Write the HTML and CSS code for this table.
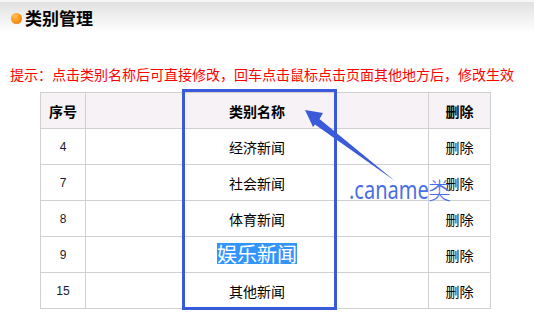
FILE: index.html
```html
<!DOCTYPE html>
<html>
<head>
<meta charset="utf-8">
<link rel="stylesheet" href="styles.css">
</head>
<body>
<div class="header">
  <span class="dot"></span>
  <span class="title">类别管理</span>
</div>
<p class="hint">提示：点击类别名称后可直接修改，回车点击鼠标点击页面其他地方后，修改生效</p>
<table class="grid">
  <colgroup>
    <col class="c-id">
    <col class="c-name">
    <col class="c-del">
  </colgroup>
  <thead>
    <tr><th>序号</th><th>类别名称</th><th>删除</th></tr>
  </thead>
  <tbody>
    <tr><td class="num">4</td><td>经济新闻</td><td>删除</td></tr>
    <tr><td class="num">7</td><td>社会新闻</td><td>删除</td></tr>
    <tr><td class="num">8</td><td>体育新闻</td><td>删除</td></tr>
    <tr><td class="num">9</td><td><span class="selected">娱乐新闻</span></td><td>删除</td></tr>
    <tr><td class="num">15</td><td>其他新闻</td><td>删除</td></tr>
  </tbody>
</table>
<div class="focus-box"></div>
<svg class="arrow" width="534" height="330" viewBox="0 0 534 330">
  <polygon points="305,110 323,113 319.5,119 395,181 315,124.5 313,127" fill="#3a5bd9"/>
</svg>
<div class="note"><span class="note-latin">.caname</span><span class="note-cjk">类</span></div>
</body>
</html>
```
FILE: styles.css
```css
html, body {
  margin: 0;
  padding: 0;
  background: #fff;
}
body {
  position: relative;
  width: 534px;
  height: 330px;
  overflow: hidden;
  font-family: "Noto Sans CJK SC", "Liberation Sans", sans-serif;
  color: #000;
}
.header {
  height: 31px;
  border-top: 2px solid #f6f6f6;
  background: linear-gradient(#e1e1e1, #ffffff);
  display: flex;
  align-items: center;
  padding-left: 11px;
  gap: 3px;
}
.dot {
  width: 11px;
  height: 11px;
  border-radius: 50%;
  background: radial-gradient(circle at 35% 30%, #ffc060 0%, #ff9a1a 45%, #ee6a00 100%);
  margin-top: 2px;
}
.title {
  font-size: 17px;
  font-weight: bold;
  line-height: 20px;
  margin-top: 1px;
}
.hint {
  margin: 31px 0 0 10px;
  font-size: 14px;
  line-height: 20px;
  color: #ff0000;
  white-space: nowrap;
}
.grid {
  margin: 8px 0 0 40px;
  border-collapse: collapse;
  table-layout: fixed;
  width: 450px;
  font-size: 14px;
}
.c-id { width: 45px; }
.c-name { width: 343px; }
.c-del { width: 62px; }
.grid th, .grid td {
  border: 1px solid #d0d0d0;
  height: 35px;
  padding: 0;
  text-align: center;
  vertical-align: middle;
  line-height: 20px;
}
.grid th {
  background: #f6f2f6;
  font-weight: bold;
}
.grid td.num {
  font-family: "Liberation Sans", sans-serif;
  font-size: 12px;
  color: #1a1a2e;
}
.selected {
  display: inline-block;
  font-size: 20px;
  line-height: 21px;
  background: #3395fb;
  color: #fff;
  padding: 0;
}
.focus-box {
  position: absolute;
  left: 182px;
  top: 89px;
  width: 149px;
  height: 215px;
  border: 3px solid #3a5bd9;
}
.arrow {
  position: absolute;
  left: 0;
  top: 0;
  pointer-events: none;
}
.note {
  position: absolute;
  left: 349px;
  top: 174px;
  display: flex;
  align-items: baseline;
  color: #4a6ee6;
  pointer-events: none;
}
.note-latin {
  display: inline-block;
  width: 79px;
  font-family: "Noto Sans", sans-serif;
  font-size: 26px;
  line-height: 30px;
  transform: scaleX(0.77);
  transform-origin: left center;
  white-space: nowrap;
}
.note-cjk {
  font-family: "Noto Sans CJK SC", sans-serif;
  font-size: 23px;
  line-height: 30px;
  font-weight: 300;
}
```
